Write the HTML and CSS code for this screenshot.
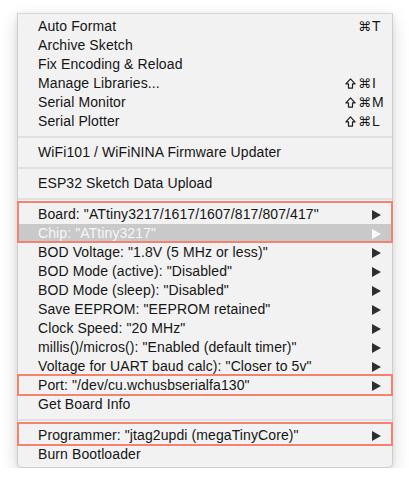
FILE: index.html
```html
<!DOCTYPE html>
<html>
<head>
<meta charset="utf-8">
<link rel="stylesheet" href="styles.css">
</head>
<body>
<div class="menu">
  <div class="item"><span class="label">Auto Format</span><span class="mods">⌘</span><span class="key">T</span></div>
  <div class="item"><span class="label">Archive Sketch</span></div>
  <div class="item"><span class="label">Fix Encoding &amp; Reload</span></div>
  <div class="item"><span class="label">Manage Libraries...</span><span class="mods"><svg class="shift" viewBox="0 0 12 12" width="11" height="11"><path d="M6 1 L11 6.5 H8.2 V11 H3.8 V6.5 H1 Z"/></svg>⌘</span><span class="key">I</span></div>
  <div class="item"><span class="label">Serial Monitor</span><span class="mods"><svg class="shift" viewBox="0 0 12 12" width="11" height="11"><path d="M6 1 L11 6.5 H8.2 V11 H3.8 V6.5 H1 Z"/></svg>⌘</span><span class="key">M</span></div>
  <div class="item"><span class="label">Serial Plotter</span><span class="mods"><svg class="shift" viewBox="0 0 12 12" width="11" height="11"><path d="M6 1 L11 6.5 H8.2 V11 H3.8 V6.5 H1 Z"/></svg>⌘</span><span class="key">L</span></div>
  <div class="sep"></div>
  <div class="item"><span class="label">WiFi101 / WiFiNINA Firmware Updater</span></div>
  <div class="sep"></div>
  <div class="item"><span class="label">ESP32 Sketch Data Upload</span></div>
  <div class="sep"></div>
  <div class="group group-board">
    <div class="item"><span class="label">Board: "ATtiny3217/1617/1607/817/807/417"</span><span class="key"><span class="arrow"></span></span></div>
    <div class="item active"><span class="label">Chip: "ATtiny3217"</span><span class="key"><span class="arrow"></span></span></div>
  </div>
  <div class="item"><span class="label">BOD Voltage: "1.8V (5 MHz or less)"</span><span class="key"><span class="arrow"></span></span></div>
  <div class="item"><span class="label">BOD Mode (active): "Disabled"</span><span class="key"><span class="arrow"></span></span></div>
  <div class="item"><span class="label">BOD Mode (sleep): "Disabled"</span><span class="key"><span class="arrow"></span></span></div>
  <div class="item"><span class="label">Save EEPROM: "EEPROM retained"</span><span class="key"><span class="arrow"></span></span></div>
  <div class="item"><span class="label">Clock Speed: "20 MHz"</span><span class="key"><span class="arrow"></span></span></div>
  <div class="item"><span class="label">millis()/micros(): "Enabled (default timer)"</span><span class="key"><span class="arrow"></span></span></div>
  <div class="item"><span class="label">Voltage for UART baud calc): "Closer to 5v"</span><span class="key"><span class="arrow"></span></span></div>
  <div class="group group-port">
    <div class="item"><span class="label">Port: "/dev/cu.wchusbserialfa130"</span><span class="key"><span class="arrow"></span></span></div>
  </div>
  <div class="item"><span class="label">Get Board Info</span></div>
  <div class="sep"></div>
  <div class="group group-prog">
    <div class="item"><span class="label">Programmer: "jtag2updi (megaTinyCore)"</span><span class="key"><span class="arrow"></span></span></div>
  </div>
  <div class="item"><span class="label">Burn Bootloader</span></div>
</div>
</body>
</html>
```
FILE: styles.css
```css
* { box-sizing: border-box; }
html, body { margin: 0; padding: 0; background: #ffffff; }
body {
  font-family: "Liberation Sans", Arial, "DejaVu Sans", sans-serif;
  font-size: 14px;
  color: #151515;
}
.menu {
  margin: 13px 0 0 17px;
  width: 376px;
  background: #f2f2f2;
  border: 1px solid #cfcfcf;
  border-top-color: #d8d8d8;
  border-radius: 0 0 5px 5px;
  box-shadow: 0 6px 18px rgba(0,0,0,0.16), 0 1px 4px rgba(0,0,0,0.08);
  padding: 3px 0 3px 0;
}
.item {
  display: grid;
  grid-template-columns: 1fr auto 15px;
  align-items: center;
  height: 19px;
  line-height: 19px;
  padding: 0 5px 0 20px;
  white-space: nowrap;
  letter-spacing: 0.1px;
}
.label { grid-column: 1; }
.mods {
  grid-column: 2;
  display: flex;
  align-items: center;
  justify-content: flex-end;
  gap: 2px;
  padding-right: 1px;
  font-family: "DejaVu Sans", sans-serif;
  font-size: 13px;
  letter-spacing: 0;
}
.shift {
  display: block;
  fill: none;
  stroke: #1e1e1e;
  stroke-width: 1.3;
  stroke-linejoin: round;
}
.key { grid-column: 3; display: flex; align-items: center; height: 19px; }
.arrow {
  width: 0;
  height: 0;
  border-top: 5px solid transparent;
  border-bottom: 5px solid transparent;
  border-left: 9px solid #2e2e2e;
}
.active { background: #c9c9c9; color: #f7f7f7; }
.active .arrow { border-left-color: #fafafa; }
.sep {
  height: 12px;
  display: flex;
  align-items: center;
}
.sep::before {
  content: "";
  display: block;
  width: 100%;
  height: 2px;
  background: #e0e0e0;
}
.group { position: relative; }
.group::after {
  content: "";
  position: absolute;
  left: -1px;
  right: -1px;
  top: -4px;
  bottom: 0;
  border: 2px solid #f3836f;
  pointer-events: none;
}
.group-port::after { top: -2px; bottom: -1px; }
.group-prog::after { top: -4px; bottom: -1px; }
```
